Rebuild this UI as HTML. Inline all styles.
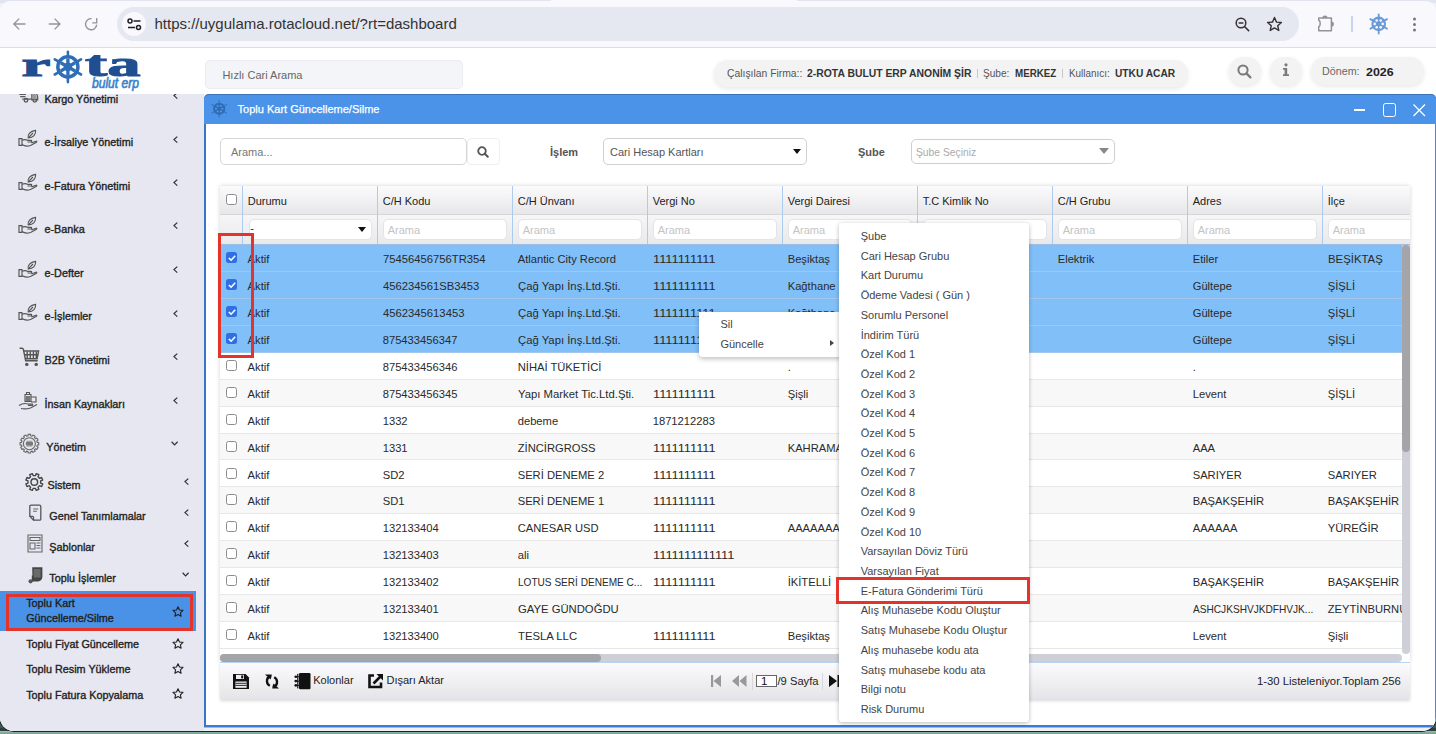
<!DOCTYPE html>
<html><head><meta charset="utf-8"><style>
*{box-sizing:border-box}
html,body{margin:0;padding:0}
body{width:1436px;height:734px;overflow:hidden;position:relative;background:#3e5a50;font-family:"Liberation Sans",sans-serif;color:#222}
.abs{position:absolute}
.t{position:absolute;white-space:nowrap;line-height:normal}
svg{position:absolute;overflow:visible}
.hp{background:#f3f3f3;box-shadow:0 2px 5px rgba(0,0,0,.09)}
</style></head><body>
<div class="abs" style="left:0;top:728px;width:1436px;height:6px;background:linear-gradient(#2c403c 0,#2c403c 2.5px,#95bfae 3.5px,#7aa594 5px)"></div>
<div class="abs" style="left:0;top:0;width:1436px;height:731px;border-radius:0 0 14px 14px;overflow:hidden;background:#f0f0f8;box-shadow:0 0 0 1px #222">
<div class="abs" style="left:0px;top:0px;width:1436px;height:3px;background:#e2e5ef"></div>
<div class="abs" style="left:0px;top:1px;width:1436px;height:46px;background:#f8f8fd;border-radius:10px 10px 0 0"></div>
<div class="abs" style="left:551px;top:0px;width:246px;height:3px;background:#f8f8fd"></div>
<div class="abs" style="left:0px;top:47px;width:1436px;height:1px;background:#dcdee6"></div>
<div class="abs" style="left:117px;top:7px;width:1182px;height:34px;border-radius:17px;background:#e5e8f0"></div>
<div class="abs" style="left:122px;top:12px;width:24px;height:24px;border-radius:12px;background:#f8f8fd"></div>
<div class="t" style="left:154.50px;top:15.22px;font-size:15px;color:#333;">https://uygulama.rotacloud.net/?rt=dashboard</div>
<svg style="left:12px;top:17px" width="15" height="14" viewBox="0 0 15 14"><path d="M13.5 7H2.5M7.2 1.6L1.8 7l5.4 5.4" fill="none" stroke="#939398" stroke-width="1.3"/></svg>
<svg style="left:48px;top:17px" width="15" height="14" viewBox="0 0 15 14"><path d="M0.8 7h11M6.6 1.6L12 7l-5.4 5.4" fill="none" stroke="#939398" stroke-width="1.3"/></svg>
<svg style="left:84px;top:17px" width="15" height="15" viewBox="0 0 15 15"><path d="M7.6 1.6A5.6 5.6 0 1 0 12.7 7.6" fill="none" stroke="#939398" stroke-width="1.35"/><path d="M12.7 1v4.8H8.3" fill="none" stroke="#939398" stroke-width="1.35"/></svg>
<svg style="left:127px;top:18px" width="15" height="13" viewBox="0 0 15 13"><circle cx="3" cy="3" r="2" fill="none" stroke="#1f1f1f" stroke-width="1.5"/><path d="M6.5 3h7M1 9.5h7" stroke="#1f1f1f" stroke-width="1.5"/><circle cx="11.5" cy="9.5" r="2" fill="none" stroke="#1f1f1f" stroke-width="1.5"/></svg>
<svg style="left:1235px;top:17px" width="16" height="15" viewBox="0 0 16 15"><circle cx="6" cy="6" r="4.8" fill="none" stroke="#333" stroke-width="1.5"/><path d="M3.6 6h4.8M9.5 9.5l4.6 4.6" stroke="#333" stroke-width="1.5"/></svg>
<svg style="left:1266px;top:16px" width="17" height="16" viewBox="0 0 17 16"><path d="M8.5 1.5l2 4.6 4.9.4-3.7 3.2 1.1 4.8-4.3-2.6-4.3 2.6 1.1-4.8L1.6 6.5l4.9-.4z" fill="none" stroke="#333" stroke-width="1.4" stroke-linejoin="round"/></svg>
<svg style="left:1317px;top:14px" width="19" height="18" viewBox="0 0 19 18"><path d="M1.75 3.95H14.4V16.7H1.75V12.8C3.7 12.1 3.7 6.9 1.75 6.2Z" fill="none" stroke="#929297" stroke-width="1.5" stroke-linejoin="round"/><path d="M5.3 4.1a2.65 2.65 0 0 1 5.3 0z" fill="#929297"/><path d="M14.4 7.4a2.55 2.55 0 0 1 0 5.1z" fill="#929297"/></svg>
<div class="abs" style="left:1351px;top:16px;width:1.5px;height:16px;background:#c8d5f3"></div>
<svg style="left:1412px;top:17px" width="5" height="15" viewBox="0 0 5 15"><circle cx="2.5" cy="2" r="1.5" fill="#777"/><circle cx="2.5" cy="7.5" r="1.5" fill="#777"/><circle cx="2.5" cy="13" r="1.5" fill="#777"/></svg>
<svg style="left:0;top:0" width="1436" height="734" viewBox="0 0 1436 734"><path d="M1384.76 20.40L1387.01 19.10M1378.70 16.90L1378.70 14.30M1372.64 20.40L1370.39 19.10M1372.64 27.40L1370.39 28.70M1378.70 30.90L1378.70 33.50M1384.76 27.40L1387.01 28.70" stroke="#6b9ad7" stroke-width="1.8" stroke-linecap="round"/><circle cx="1378.7" cy="23.9" r="7.3" fill="#6b9ad7"/><circle cx="1382.70" cy="23.90" r="1.3" fill="#f8f8fd"/><circle cx="1380.70" cy="20.44" r="1.3" fill="#f8f8fd"/><circle cx="1376.70" cy="20.44" r="1.3" fill="#f8f8fd"/><circle cx="1374.70" cy="23.90" r="1.3" fill="#f8f8fd"/><circle cx="1376.70" cy="27.36" r="1.3" fill="#f8f8fd"/><circle cx="1380.70" cy="27.36" r="1.3" fill="#f8f8fd"/></svg>
<div class="abs" style="left:0px;top:48px;width:1436px;height:679px;background:#fff"></div>
<div class="abs" style="left:0px;top:727px;width:1436px;height:1px;background:#b4b4bc"></div>
<div class="abs" style="left:0px;top:728px;width:1436px;height:3px;background:#f0f0f8"></div>
<svg style="left:0px;top:46px" width="150" height="50" viewBox="0 0 150 50">
<text x="21.6" y="30" font-family="Liberation Serif" font-weight="bold" font-size="34" fill="#1f4f91" stroke="#1f4f91" stroke-width="1" textLength="29" lengthAdjust="spacingAndGlyphs">r</text>
<text x="85" y="30" font-family="Liberation Serif" font-weight="bold" font-size="35" fill="#1f4f91" stroke="#1f4f91" stroke-width="1" textLength="55.5" lengthAdjust="spacingAndGlyphs">ta</text>
<text x="92" y="42.3" font-family="Liberation Sans" font-style="italic" font-size="14" fill="#3d84cc" stroke="#3d84cc" stroke-width="0.7" textLength="47" lengthAdjust="spacingAndGlyphs">bulut erp</text>
</svg>
<div class="abs" style="left:205px;top:60px;width:258px;height:29px;border-radius:5px;background:#f4f5f9;border:1px solid #ebebf0"></div>
<div class="t" style="left:222.40px;top:69.25px;font-size:11px;color:#666;">Hızlı Cari Arama</div>
<div class="abs hp" style="left:714px;top:60px;width:474px;height:27px;border-radius:14px"></div>
<div class="t" style="left:727.00px;top:66.86px;font-size:11.2px;color:#555;transform:scaleX(0.9248);transform-origin:0 0;">Çalışılan Firma::</div>
<div class="t" style="left:806.70px;top:66.86px;font-size:11.2px;color:#333;font-weight:700;transform:scaleX(0.9282);transform-origin:0 0;">2-ROTA BULUT ERP ANONİM ŞİR</div>
<div class="t" style="left:983.40px;top:66.86px;font-size:11.2px;color:#555;transform:scaleX(0.9020);transform-origin:0 0;">Şube:</div>
<div class="t" style="left:1014.80px;top:66.86px;font-size:11.2px;color:#333;font-weight:700;transform:scaleX(0.8734);transform-origin:0 0;">MERKEZ</div>
<div class="t" style="left:1068.60px;top:66.86px;font-size:11.2px;color:#555;transform:scaleX(0.8835);transform-origin:0 0;">Kullanıcı:</div>
<div class="t" style="left:1114.60px;top:66.86px;font-size:11.2px;color:#333;font-weight:700;transform:scaleX(0.9100);transform-origin:0 0;">UTKU ACAR</div>
<div class="abs" style="left:977px;top:69px;width:1px;height:9px;background:#c8c8c8"></div>
<div class="abs" style="left:1061.5px;top:69px;width:1px;height:9px;background:#c8c8c8"></div>
<div class="abs hp" style="left:1228.5px;top:57px;width:32px;height:28px;border-radius:14px"></div>
<svg style="left:1237px;top:64px" width="15" height="15" viewBox="0 0 15 15"><circle cx="6" cy="6" r="4.6" fill="none" stroke="#7a7a7c" stroke-width="2"/><path d="M9.4 9.4l4 4" stroke="#7a7a7c" stroke-width="2.2" stroke-linecap="round"/></svg>
<div class="abs hp" style="left:1270px;top:57px;width:32px;height:28px;border-radius:14px"></div>
<svg style="left:1282px;top:63px" width="8" height="14" viewBox="0 0 8 14"><circle cx="4" cy="1.8" r="1.6" fill="#7a7a7c"/><path d="M1 5h4.2v6.3H7V13H1v-1.7h1.6V6.7H1z" fill="#7a7a7c"/></svg>
<div class="abs hp" style="left:1311px;top:57px;width:113px;height:28px;border-radius:14px"></div>
<div class="t" style="left:1322.40px;top:64.58px;font-size:11.4px;color:#666;transform:scaleX(0.9420);transform-origin:0 0;">Dönem:</div>
<div class="t" style="left:1365.80px;top:64.50px;font-size:11.6px;color:#222;font-weight:700;transform:scaleX(1.0695);transform-origin:0 0;">2026</div>
<svg style="left:0;top:0" width="1436" height="734" viewBox="0 0 1436 734"><circle cx="67.9" cy="66.9" r="10.05" fill="none" stroke="#2f6db6" stroke-width="3.50"/><circle cx="67.9" cy="66.9" r="4.3" fill="#2f6db6"/><path d="M67.90 66.90L75.09 62.75M67.90 66.90L67.90 58.60M67.90 66.90L60.71 62.75M67.90 66.90L60.71 71.05M67.90 66.90L67.90 75.20M67.90 66.90L75.09 71.05" stroke="#2f6db6" stroke-width="3.3"/><path d="M77.69 61.25L81.06 59.30M67.90 55.60L67.90 51.70M58.11 61.25L54.74 59.30M58.11 72.55L54.74 74.50M67.90 78.20L67.90 82.10M77.69 72.55L81.06 74.50" stroke="#2f6db6" stroke-width="2.6" stroke-linecap="round"/></svg>
<div class="abs" style="left:0px;top:94px;width:204px;height:640px;background:#e6e7f0"></div>
<div class="abs" style="left:0;top:94px;width:204px;height:640px;overflow:hidden"><div class="abs" style="left:0;top:-94px;width:204px;height:733px">
<div class="t" style="left:44.50px;top:92.73px;font-size:10.8px;color:#222;-webkit-text-stroke:0.35px #222;">Kargo Yönetimi</div>
<svg style="left:173.4px;top:91.9px" width="6" height="8" viewBox="0 0 6 8"><path d="M4.3 0.6L1 3.6 4.3 6.6" fill="none" stroke="#333" stroke-width="1.25"/></svg>
<svg style="left:18.5px;top:91.9px" width="20" height="13" viewBox="0 0 20 13"><g fill="none" stroke="#5a5a5a" stroke-width="1.35"><path d="M0.3 2.2h6.5M1.2 4.6h5.3"/><path d="M3.3 7.1h9.8M12.9 0.5h1.9c2.2 0 3.8 2.4 3.8 5v2.4h-5.7z"/><circle cx="7" cy="8.3" r="1.8"/><circle cx="15.8" cy="8.3" r="1.8"/></g><path d="M13.6 1.5h1.2c1.5 0 2.7 1.8 2.7 3.8v1.6h-3.9z" fill="#999"/></svg>
<div class="t" style="left:44.50px;top:136.43px;font-size:10.8px;color:#222;-webkit-text-stroke:0.35px #222;">e-İrsaliye Yönetimi</div>
<svg style="left:173.4px;top:135.6px" width="6" height="8" viewBox="0 0 6 8"><path d="M4.3 0.6L1 3.6 4.3 6.6" fill="none" stroke="#333" stroke-width="1.25"/></svg>
<svg style="left:18px;top:130.2px" width="20" height="18" viewBox="0 0 20 18"><g fill="none" stroke="#555" stroke-width="1.15"><path d="M1 8.6h3v6.8H1z"/><path d="M4 10.2c2-.7 4-.7 6 .2h3c1 0 1 1.6 0 1.6h-3.5M4 14.6c3 2 6 1.8 9 .6l5.5-3c.7-.5.1-1.4-.7-1l-4.3 1.8"/><path d="M10.2 8C9.5 4.5 12 1.2 17.6.4c.4 4.1-2.1 7.1-7.4 7.6zM10.5 7.6L15 3"/></g></svg>
<div class="t" style="left:44.50px;top:179.83px;font-size:10.8px;color:#222;-webkit-text-stroke:0.35px #222;">e-Fatura Yönetimi</div>
<svg style="left:173.4px;top:179.0px" width="6" height="8" viewBox="0 0 6 8"><path d="M4.3 0.6L1 3.6 4.3 6.6" fill="none" stroke="#333" stroke-width="1.25"/></svg>
<svg style="left:18px;top:173.6px" width="20" height="18" viewBox="0 0 20 18"><g fill="none" stroke="#555" stroke-width="1.15"><path d="M1 8.6h3v6.8H1z"/><path d="M4 10.2c2-.7 4-.7 6 .2h3c1 0 1 1.6 0 1.6h-3.5M4 14.6c3 2 6 1.8 9 .6l5.5-3c.7-.5.1-1.4-.7-1l-4.3 1.8"/><path d="M10.2 8C9.5 4.5 12 1.2 17.6.4c.4 4.1-2.1 7.1-7.4 7.6zM10.5 7.6L15 3"/></g></svg>
<div class="t" style="left:44.50px;top:223.23px;font-size:10.8px;color:#222;-webkit-text-stroke:0.35px #222;">e-Banka</div>
<svg style="left:173.4px;top:222.4px" width="6" height="8" viewBox="0 0 6 8"><path d="M4.3 0.6L1 3.6 4.3 6.6" fill="none" stroke="#333" stroke-width="1.25"/></svg>
<svg style="left:18px;top:217px" width="20" height="18" viewBox="0 0 20 18"><g fill="none" stroke="#555" stroke-width="1.15"><path d="M1 8.6h3v6.8H1z"/><path d="M4 10.2c2-.7 4-.7 6 .2h3c1 0 1 1.6 0 1.6h-3.5M4 14.6c3 2 6 1.8 9 .6l5.5-3c.7-.5.1-1.4-.7-1l-4.3 1.8"/><path d="M10.2 8C9.5 4.5 12 1.2 17.6.4c.4 4.1-2.1 7.1-7.4 7.6zM10.5 7.6L15 3"/></g></svg>
<div class="t" style="left:44.50px;top:266.83px;font-size:10.8px;color:#222;-webkit-text-stroke:0.35px #222;">e-Defter</div>
<svg style="left:173.4px;top:266.0px" width="6" height="8" viewBox="0 0 6 8"><path d="M4.3 0.6L1 3.6 4.3 6.6" fill="none" stroke="#333" stroke-width="1.25"/></svg>
<svg style="left:18px;top:260.6px" width="20" height="18" viewBox="0 0 20 18"><g fill="none" stroke="#555" stroke-width="1.15"><path d="M1 8.6h3v6.8H1z"/><path d="M4 10.2c2-.7 4-.7 6 .2h3c1 0 1 1.6 0 1.6h-3.5M4 14.6c3 2 6 1.8 9 .6l5.5-3c.7-.5.1-1.4-.7-1l-4.3 1.8"/><path d="M10.2 8C9.5 4.5 12 1.2 17.6.4c.4 4.1-2.1 7.1-7.4 7.6zM10.5 7.6L15 3"/></g></svg>
<div class="t" style="left:44.50px;top:310.33px;font-size:10.8px;color:#222;-webkit-text-stroke:0.35px #222;">e-İşlemler</div>
<svg style="left:173.4px;top:309.5px" width="6" height="8" viewBox="0 0 6 8"><path d="M4.3 0.6L1 3.6 4.3 6.6" fill="none" stroke="#333" stroke-width="1.25"/></svg>
<svg style="left:18px;top:304.1px" width="20" height="18" viewBox="0 0 20 18"><g fill="none" stroke="#555" stroke-width="1.15"><path d="M1 8.6h3v6.8H1z"/><path d="M4 10.2c2-.7 4-.7 6 .2h3c1 0 1 1.6 0 1.6h-3.5M4 14.6c3 2 6 1.8 9 .6l5.5-3c.7-.5.1-1.4-.7-1l-4.3 1.8"/><path d="M10.2 8C9.5 4.5 12 1.2 17.6.4c.4 4.1-2.1 7.1-7.4 7.6zM10.5 7.6L15 3"/></g></svg>
<div class="t" style="left:44.50px;top:353.63px;font-size:10.8px;color:#222;-webkit-text-stroke:0.35px #222;">B2B Yönetimi</div>
<svg style="left:173.4px;top:352.79999999999995px" width="6" height="8" viewBox="0 0 6 8"><path d="M4.3 0.6L1 3.6 4.3 6.6" fill="none" stroke="#333" stroke-width="1.25"/></svg>
<svg style="left:18.5px;top:347.4px" width="21" height="20" viewBox="0 0 21 20"><g fill="none" stroke="#555" stroke-width="1.4"><path d="M0.6 1.2h2.3c.9 0 1.3.5 1.5 1.3l2.3 11.2h12"/><path d="M4.6 4h15l-1.5 7.8H6.2"/><path d="M8.2 4.5v7M11.3 4.5v7M14.4 4.5v7M17.3 4.5v7M5.3 7.8h14"/></g><circle cx="7.8" cy="17.4" r="1.7" fill="#555"/><circle cx="17.2" cy="17.4" r="1.7" fill="#555"/></svg>
<div class="t" style="left:44.50px;top:397.63px;font-size:10.8px;color:#222;-webkit-text-stroke:0.35px #222;">İnsan Kaynakları</div>
<svg style="left:173.4px;top:396.79999999999995px" width="6" height="8" viewBox="0 0 6 8"><path d="M4.3 0.6L1 3.6 4.3 6.6" fill="none" stroke="#333" stroke-width="1.25"/></svg>
<svg style="left:18px;top:391.4px" width="21" height="19" viewBox="0 0 21 19"><g fill="none" stroke="#555" stroke-width="1.1"><path d="M7 3.5h6v7H7z"/><path d="M8.5 3.5v-2h3v2"/><path d="M13 6h5v5h-5"/><path d="M1 14.5c3-2 6-2.5 9-1.5h4c1 0 1 1.4 0 1.4h-4M3 17.5c3 0.6 6 .6 9.5-.6l6.5-3.5"/></g><rect x="7.5" y="5" width="5" height="5" fill="#777"/></svg>
<div class="t" style="left:46.30px;top:441.03px;font-size:10.8px;color:#222;-webkit-text-stroke:0.35px #222;">Yönetim</div>
<svg style="left:170.8px;top:441.4px" width="8" height="6" viewBox="0 0 8 6"><path d="M0.6 0.8L3.6 3.9 6.6 0.8" fill="none" stroke="#333" stroke-width="1.25"/></svg>
<svg style="left:0;top:0" width="1436" height="734" viewBox="0 0 1436 734"><path d="M37.18 442.34L38.72 442.47L38.72 444.93L37.18 445.06L36.82 446.41L38.08 447.30L36.86 449.42L35.46 448.77L34.47 449.76L35.12 451.16L33.00 452.38L32.11 451.12L30.76 451.48L30.63 453.02L28.17 453.02L28.04 451.48L26.69 451.12L25.80 452.38L23.68 451.16L24.33 449.76L23.34 448.77L21.94 449.42L20.72 447.30L21.98 446.41L21.62 445.06L20.08 444.93L20.08 442.47L21.62 442.34L21.98 440.99L20.72 440.10L21.94 437.98L23.34 438.63L24.33 437.64L23.68 436.24L25.80 435.02L26.69 436.28L28.04 435.92L28.17 434.38L30.63 434.38L30.76 435.92L32.11 436.28L33.00 435.02L35.12 436.24L34.47 437.64L35.46 438.63L36.86 437.98L38.08 440.10L36.82 440.99Z" fill="none" stroke="#666" stroke-width="1.1" stroke-linejoin="round"/><circle cx="29.4" cy="443.7" r="6" fill="none" stroke="#666" stroke-width="1.1"/><rect x="25.8" y="441.6" width="7.2" height="4.2" rx="1.5" fill="#7a7a7a"/><path d="M26.5 441.2h6M26.5 446.2h6" stroke="#999" stroke-width="0.8"/></svg>\n<div class="t" style="left:47.50px;top:479.23px;font-size:10.8px;color:#222;-webkit-text-stroke:0.35px #222;">Sistem</div>
<svg style="left:184.4px;top:478.2px" width="6" height="8" viewBox="0 0 6 8"><path d="M4.3 0.6L1 3.6 4.3 6.6" fill="none" stroke="#333" stroke-width="1.25"/></svg>
<svg style="left:0;top:0" width="1436" height="734" viewBox="0 0 1436 734"><path d="M40.61 483.05L42.68 483.94L41.60 486.55L39.51 485.72L38.02 487.21L38.85 489.30L36.24 490.38L35.35 488.31L33.25 488.31L32.36 490.38L29.75 489.30L30.58 487.21L29.09 485.72L27.00 486.55L25.92 483.94L27.99 483.05L27.99 480.95L25.92 480.06L27.00 477.45L29.09 478.28L30.58 476.79L29.75 474.70L32.36 473.62L33.25 475.69L35.35 475.69L36.24 473.62L38.85 474.70L38.02 476.79L39.51 478.28L41.60 477.45L42.68 480.06L40.61 480.95Z" fill="none" stroke="#444" stroke-width="1.35" stroke-linejoin="round"/><circle cx="34.3" cy="482" r="3.3" fill="none" stroke="#444" stroke-width="1.4"/></svg>\n<div class="t" style="left:49.30px;top:510.03px;font-size:10.8px;color:#222;-webkit-text-stroke:0.35px #222;">Genel Tanımlamalar</div>
<svg style="left:184.4px;top:508.99999999999994px" width="6" height="8" viewBox="0 0 6 8"><path d="M4.3 0.6L1 3.6 4.3 6.6" fill="none" stroke="#333" stroke-width="1.25"/></svg>
<svg style="left:28px;top:503.99999999999994px" width="15" height="18" viewBox="0 0 15 18"><path d="M3 1.2h8.6c.7 0 1.2.5 1.2 1.2v12.6c0 .7-.5 1.2-1.2 1.2H5.6L1.8 12.4V2.4c0-.7.5-1.2 1.2-1.2z" fill="none" stroke="#555" stroke-width="1.3" stroke-linejoin="round"/><path d="M1.9 12.4h2.6c.6 0 1.1.5 1.1 1.1v2.7" fill="none" stroke="#555" stroke-width="1.2"/><path d="M5.2 5h5M5.2 7.3h3.6" stroke="#666" stroke-width="1.1"/></svg>\n<div class="t" style="left:49.30px;top:541.03px;font-size:10.8px;color:#222;-webkit-text-stroke:0.35px #222;">Şablonlar</div>
<svg style="left:184.4px;top:540.0px" width="6" height="8" viewBox="0 0 6 8"><path d="M4.3 0.6L1 3.6 4.3 6.6" fill="none" stroke="#333" stroke-width="1.25"/></svg>
<svg style="left:27px;top:534.3px" width="16" height="19" viewBox="0 0 16 19"><g fill="none" stroke="#666" stroke-width="1.1"><path d="M1 1h14v17H1z"/><path d="M3 3.5h10v3H3zM3 9h5v6H3zM9.5 9h4M9.5 11.5h4M9.5 14h4"/></g></svg>
<div class="t" style="left:49.30px;top:571.83px;font-size:10.8px;color:#222;-webkit-text-stroke:0.35px #222;">Toplu İşlemler</div>
<svg style="left:181.5px;top:572.4px" width="8" height="6" viewBox="0 0 8 6"><path d="M0.6 0.8L3.6 3.9 6.6 0.8" fill="none" stroke="#333" stroke-width="1.25"/></svg>
<svg style="left:27.5px;top:566.2px" width="16" height="18" viewBox="0 0 16 18"><path d="M4.2 1.2h10.2v9.6c0 2.6-1.8 4.6-4.4 4.6H4.6z" fill="#444"/><path d="M5.6 3h7v8.5H5.6z" fill="#6a6a6a"/><path d="M4.6 9.5v5.8" stroke="#444" stroke-width="1.6"/><circle cx="2.6" cy="15.3" r="2.1" fill="#555"/></svg>\n<div class="abs" style="left:0px;top:591.2px;width:195.7px;height:40.2px;background:#4a92e8"></div>
<div class="abs" style="left:6.2px;top:594.2px;width:186.8px;height:37.2px;border:3px solid #e3342b"></div>
<div class="t" style="left:26.20px;top:597.33px;font-size:10.8px;color:#1a1a1a;-webkit-text-stroke:0.35px #222;">Toplu Kart</div>
<div class="t" style="left:26.20px;top:612.03px;font-size:10.8px;color:#1a1a1a;-webkit-text-stroke:0.35px #222;">Güncelleme/Silme</div>
<svg style="left:172px;top:605.5px" width="12" height="11" viewBox="0 0 12 11"><path d="M6 0.8l1.5 3.2 3.5.4-2.6 2.4.7 3.4L6 8.5 2.9 10.2l.7-3.4L1 4.4l3.5-.4z" fill="none" stroke="#222" stroke-width="1.1" stroke-linejoin="round"/></svg>
<div class="t" style="left:26.20px;top:638.13px;font-size:10.8px;color:#1a1a1a;-webkit-text-stroke:0.35px #222;">Toplu Fiyat Güncelleme</div>
<svg style="left:172px;top:637.9px" width="12" height="11" viewBox="0 0 12 11"><path d="M6 0.8l1.5 3.2 3.5.4-2.6 2.4.7 3.4L6 8.5 2.9 10.2l.7-3.4L1 4.4l3.5-.4z" fill="none" stroke="#222" stroke-width="1.1" stroke-linejoin="round"/></svg>
<div class="t" style="left:26.20px;top:663.43px;font-size:10.8px;color:#1a1a1a;-webkit-text-stroke:0.35px #222;">Toplu Resim Yükleme</div>
<svg style="left:172px;top:663.2px" width="12" height="11" viewBox="0 0 12 11"><path d="M6 0.8l1.5 3.2 3.5.4-2.6 2.4.7 3.4L6 8.5 2.9 10.2l.7-3.4L1 4.4l3.5-.4z" fill="none" stroke="#222" stroke-width="1.1" stroke-linejoin="round"/></svg>
<div class="t" style="left:26.20px;top:688.63px;font-size:10.8px;color:#1a1a1a;-webkit-text-stroke:0.35px #222;">Toplu Fatura Kopyalama</div>
<svg style="left:172px;top:688.4px" width="12" height="11" viewBox="0 0 12 11"><path d="M6 0.8l1.5 3.2 3.5.4-2.6 2.4.7 3.4L6 8.5 2.9 10.2l.7-3.4L1 4.4l3.5-.4z" fill="none" stroke="#222" stroke-width="1.1" stroke-linejoin="round"/></svg>
</div></div>
<div class="abs" style="left:204px;top:94px;width:1232px;height:633px;background:#fff;border:2px solid #3a74c4;border-right:1px solid #4a8ae0;border-bottom-color:#3a7bd8;border-top:0;border-radius:5px 5px 0 0"></div>
<div class="abs" style="left:204px;top:94px;width:1232px;height:30px;background:#4a93e9;border-top:1px solid #3d74b8;border-radius:5px 5px 0 0"></div>
<svg style="left:0;top:0" width="1436" height="734" viewBox="0 0 1436 734"><path d="M224.22 105.90L226.47 104.60M219.20 103.00L219.20 100.40M214.18 105.90L211.93 104.60M214.18 111.70L211.93 113.00M219.20 114.60L219.20 117.20M224.22 111.70L226.47 113.00" stroke="#3a74bd" stroke-width="1.2" stroke-linecap="round"/><circle cx="219.2" cy="108.8" r="6.1" fill="#2f6bb6"/><circle cx="222.40" cy="108.80" r="1.05" fill="#5597e4"/><circle cx="220.80" cy="106.03" r="1.05" fill="#5597e4"/><circle cx="217.60" cy="106.03" r="1.05" fill="#5597e4"/><circle cx="216.00" cy="108.80" r="1.05" fill="#5597e4"/><circle cx="217.60" cy="111.57" r="1.05" fill="#5597e4"/><circle cx="220.80" cy="111.57" r="1.05" fill="#5597e4"/></svg>
<div class="t" style="left:237.60px;top:103.05px;font-size:11px;color:#fff;-webkit-text-stroke:0.25px #fff;">Toplu Kart Güncelleme/Silme</div>
<div class="abs" style="left:1354px;top:109px;width:11px;height:2px;background:#fff"></div>
<div class="abs" style="left:1383px;top:103px;width:13px;height:13.7px;border:1.7px solid #fff;border-radius:2.5px"></div>
<svg style="left:1413px;top:103.7px" width="12.5" height="12.5" viewBox="0 0 12.5 12.5"><path d="M0.5 0.5l11.5 11.5M12 0.5L0.5 12" stroke="#fff" stroke-width="1.3"/></svg>
<div class="abs" style="left:219.5px;top:138px;width:247px;height:27px;border:1px solid #d6d6d6;border-radius:5px 0 0 5px;border-radius:5px"></div>
<div class="t" style="left:231.00px;top:146.04px;font-size:11px;color:#777;">Arama...</div>
<div class="abs" style="left:467px;top:138px;width:33px;height:27px;border:1px solid #eeeeee;border-radius:4px"></div>
<svg style="left:477px;top:146px" width="12" height="12" viewBox="0 0 12 12"><circle cx="5" cy="5" r="3.8" fill="none" stroke="#555" stroke-width="1.8"/><path d="M7.8 7.8l3 3" stroke="#555" stroke-width="2" stroke-linecap="round"/></svg>
<div class="t" style="left:550.00px;top:146.04px;font-size:11px;color:#555;font-weight:700;">İşlem</div>
<div class="abs" style="left:603px;top:138px;width:204px;height:27px;border:1px solid #d0d0d0;border-radius:5px"></div>
<div class="t" style="left:610.00px;top:146.04px;font-size:11px;color:#555;">Cari Hesap Kartları</div>
<svg style="left:793px;top:148.5px" width="8" height="5" viewBox="0 0 8 5"><path d="M0 0h8L4 5z" fill="#111"/></svg>
<div class="t" style="left:858.00px;top:146.04px;font-size:11px;color:#555;font-weight:700;">Şube</div>
<div class="abs" style="left:911px;top:139px;width:204px;height:25px;border:1px solid #cfcfcf;border-radius:5px"></div>
<div class="t" style="left:915.80px;top:146.04px;font-size:11px;color:#aaa;transform:scaleX(0.9360);transform-origin:0 0;">Şube Seçiniz</div>
<svg style="left:1099px;top:148px" width="10" height="6" viewBox="0 0 10 6"><path d="M0 0h10L5 6z" fill="#888"/></svg>
<div class="abs" style="left:220px;top:186px;width:1190px;height:476px;box-shadow:0 0 4px rgba(0,0,0,.18);background:#fff"></div>
<div class="abs" style="left:220px;top:186px;width:1190px;height:29px;background:linear-gradient(#fbfbfc,#e7e7ea);border-bottom:1px solid #d6d6db"></div>
<div class="abs" style="left:220px;top:215px;width:1190px;height:30px;background:linear-gradient(#f6f6f7,#e9e9eb);border-bottom:1px solid #9dbde3"></div>
<div class="abs" style="left:220px;top:186px;width:1190px;height:58px;overflow:hidden"><div class="abs" style="left:-220px;top:-186px;width:1436px;height:300px">
<div class="abs" style="left:242.1px;top:186px;width:1.4px;height:58px;background:#abcbf0"></div>
<div class="t" style="left:247.70px;top:194.84px;font-size:11px;color:#222;">Durumu</div>
<div class="abs" style="left:249.0px;top:218.8px;width:122.6px;height:21px;background:#fff;border-radius:5px;border:1px solid #e4e4e6"></div>
<div class="t" style="left:250.20px;top:222.04px;font-size:11px;color:#222;">-</div>
<svg style="left:358.2px;top:227px" width="8" height="5" viewBox="0 0 8 5"><path d="M0 0h8L4 5z" fill="#111"/></svg>
<div class="abs" style="left:377.09999999999997px;top:186px;width:1.4px;height:58px;background:#abcbf0"></div>
<div class="t" style="left:382.70px;top:194.84px;font-size:11px;color:#222;">C/H Kodu</div>
<div class="abs" style="left:383.0px;top:218.8px;width:123.5px;height:21px;background:#fff;border-radius:5px;border:1px solid #e4e4e6"></div>
<div class="t" style="left:387.70px;top:223.54px;font-size:11px;color:#c4c4c4;">Arama</div>
<div class="abs" style="left:512.1px;top:186px;width:1.4px;height:58px;background:#abcbf0"></div>
<div class="t" style="left:517.70px;top:194.84px;font-size:11px;color:#222;">C/H Ünvanı</div>
<div class="abs" style="left:518.0px;top:218.8px;width:123.5px;height:21px;background:#fff;border-radius:5px;border:1px solid #e4e4e6"></div>
<div class="t" style="left:522.70px;top:223.54px;font-size:11px;color:#c4c4c4;">Arama</div>
<div class="abs" style="left:647.1px;top:186px;width:1.4px;height:58px;background:#abcbf0"></div>
<div class="t" style="left:652.70px;top:194.84px;font-size:11px;color:#222;">Vergi No</div>
<div class="abs" style="left:653.0px;top:218.8px;width:123.5px;height:21px;background:#fff;border-radius:5px;border:1px solid #e4e4e6"></div>
<div class="t" style="left:657.70px;top:223.54px;font-size:11px;color:#c4c4c4;">Arama</div>
<div class="abs" style="left:782.1px;top:186px;width:1.4px;height:58px;background:#abcbf0"></div>
<div class="t" style="left:787.70px;top:194.84px;font-size:11px;color:#222;">Vergi Dairesi</div>
<div class="abs" style="left:788.0px;top:218.8px;width:123.5px;height:21px;background:#fff;border-radius:5px;border:1px solid #e4e4e6"></div>
<div class="t" style="left:792.70px;top:223.54px;font-size:11px;color:#c4c4c4;">Arama</div>
<div class="abs" style="left:917.1px;top:186px;width:1.4px;height:58px;background:#abcbf0"></div>
<div class="t" style="left:922.70px;top:194.84px;font-size:11px;color:#222;">T.C Kimlik No</div>
<div class="abs" style="left:923.0px;top:218.8px;width:123.5px;height:21px;background:#fff;border-radius:5px;border:1px solid #e4e4e6"></div>
<div class="t" style="left:927.70px;top:223.54px;font-size:11px;color:#c4c4c4;">Arama</div>
<div class="abs" style="left:1052.1000000000001px;top:186px;width:1.4px;height:58px;background:#abcbf0"></div>
<div class="t" style="left:1057.70px;top:194.84px;font-size:11px;color:#222;">C/H Grubu</div>
<div class="abs" style="left:1058.0px;top:218.8px;width:123.5px;height:21px;background:#fff;border-radius:5px;border:1px solid #e4e4e6"></div>
<div class="t" style="left:1062.70px;top:223.54px;font-size:11px;color:#c4c4c4;">Arama</div>
<div class="abs" style="left:1187.1000000000001px;top:186px;width:1.4px;height:58px;background:#abcbf0"></div>
<div class="t" style="left:1192.70px;top:194.84px;font-size:11px;color:#222;">Adres</div>
<div class="abs" style="left:1193.0px;top:218.8px;width:123.5px;height:21px;background:#fff;border-radius:5px;border:1px solid #e4e4e6"></div>
<div class="t" style="left:1197.70px;top:223.54px;font-size:11px;color:#c4c4c4;">Arama</div>
<div class="abs" style="left:1322.1000000000001px;top:186px;width:1.4px;height:58px;background:#abcbf0"></div>
<div class="t" style="left:1327.70px;top:194.84px;font-size:11px;color:#222;">İlçe</div>
<div class="abs" style="left:1328.0px;top:218.8px;width:123.5px;height:21px;background:#fff;border-radius:5px;border:1px solid #e4e4e6"></div>
<div class="t" style="left:1332.70px;top:223.54px;font-size:11px;color:#c4c4c4;">Arama</div>
</div></div>
<div class="abs" style="left:225.6px;top:194.4px;width:11px;height:11px;border:1.3px solid #8c8c8c;border-radius:2.5px;background:#fff"></div>
<div class="abs" style="left:220px;top:244.3px;width:1182px;height:409px;overflow:hidden"><div class="abs" style="left:0;top:1px;width:1182px;height:409px">
<div class="abs" style="left:0;top:0.00px;width:1182px;height:26.9px;background:#80bff8;border-bottom:1px solid #a3c7ec"></div>
<div class="t" style="left:27.60px;top:8.06px;font-size:11.2px;color:#2a2a2a;">Aktif</div>
<div class="t" style="left:162.70px;top:8.06px;font-size:11.2px;color:#2a2a2a;transform:scaleX(1.0056);transform-origin:0 0;">75456456756TR354</div>
<div class="t" style="left:297.70px;top:8.06px;font-size:11.2px;color:#2a2a2a;">Atlantic City Record</div>
<div class="t" style="left:432.70px;top:8.06px;font-size:11.2px;color:#2a2a2a;transform:scaleX(1.1440);transform-origin:0 0;">1111111111</div>
<div class="t" style="left:567.70px;top:8.06px;font-size:11.2px;color:#2a2a2a;">Beşiktaş</div>
<div class="t" style="left:837.70px;top:8.06px;font-size:11.2px;color:#2a2a2a;">Elektrik</div>
<div class="t" style="left:972.70px;top:8.06px;font-size:11.2px;color:#2a2a2a;">Etiler</div>
<div class="t" style="left:1107.70px;top:8.06px;font-size:11.2px;color:#2a2a2a;transform:scaleX(1.0154);transform-origin:0 0;">BEŞİKTAŞ</div>
<div class="abs" style="left:6px;top:7.10px;width:11px;height:11px;border-radius:2.5px;background:#2f6fe4"></div>
<svg style="left:7.5px;top:9.60px" width="8" height="6" viewBox="0 0 8 6"><path d="M0.8 3l2.3 2.2L7.2 0.8" fill="none" stroke="#fff" stroke-width="1.6"/></svg>
<div class="abs" style="left:0;top:26.90px;width:1182px;height:26.9px;background:#80bff8;border-bottom:1px solid #a3c7ec"></div>
<div class="t" style="left:27.60px;top:34.96px;font-size:11.2px;color:#2a2a2a;">Aktif</div>
<div class="t" style="left:162.70px;top:34.96px;font-size:11.2px;color:#2a2a2a;transform:scaleX(1.0056);transform-origin:0 0;">456234561SB3453</div>
<div class="t" style="left:297.70px;top:34.96px;font-size:11.2px;color:#2a2a2a;transform:scaleX(1.0102);transform-origin:0 0;">Çağ Yapı İnş.Ltd.Şti.</div>
<div class="t" style="left:432.70px;top:34.96px;font-size:11.2px;color:#2a2a2a;transform:scaleX(1.1440);transform-origin:0 0;">1111111111</div>
<div class="t" style="left:567.70px;top:34.96px;font-size:11.2px;color:#2a2a2a;">Kağthane</div>
<div class="t" style="left:972.70px;top:34.96px;font-size:11.2px;color:#2a2a2a;">Gültepe</div>
<div class="t" style="left:1107.70px;top:34.96px;font-size:11.2px;color:#2a2a2a;">ŞİŞLİ</div>
<div class="abs" style="left:6px;top:34.00px;width:11px;height:11px;border-radius:2.5px;background:#2f6fe4"></div>
<svg style="left:7.5px;top:36.50px" width="8" height="6" viewBox="0 0 8 6"><path d="M0.8 3l2.3 2.2L7.2 0.8" fill="none" stroke="#fff" stroke-width="1.6"/></svg>
<div class="abs" style="left:0;top:53.80px;width:1182px;height:26.9px;background:#80bff8;border-bottom:1px solid #a3c7ec"></div>
<div class="t" style="left:27.60px;top:61.86px;font-size:11.2px;color:#2a2a2a;">Aktif</div>
<div class="t" style="left:162.70px;top:61.86px;font-size:11.2px;color:#2a2a2a;transform:scaleX(1.0066);transform-origin:0 0;">4562345613453</div>
<div class="t" style="left:297.70px;top:61.86px;font-size:11.2px;color:#2a2a2a;transform:scaleX(1.0102);transform-origin:0 0;">Çağ Yapı İnş.Ltd.Şti.</div>
<div class="t" style="left:432.70px;top:61.86px;font-size:11.2px;color:#2a2a2a;transform:scaleX(1.1440);transform-origin:0 0;">1111111111</div>
<div class="t" style="left:567.70px;top:61.86px;font-size:11.2px;color:#2a2a2a;">Kağthane</div>
<div class="t" style="left:972.70px;top:61.86px;font-size:11.2px;color:#2a2a2a;">Gültepe</div>
<div class="t" style="left:1107.70px;top:61.86px;font-size:11.2px;color:#2a2a2a;">ŞİŞLİ</div>
<div class="abs" style="left:6px;top:60.90px;width:11px;height:11px;border-radius:2.5px;background:#2f6fe4"></div>
<svg style="left:7.5px;top:63.40px" width="8" height="6" viewBox="0 0 8 6"><path d="M0.8 3l2.3 2.2L7.2 0.8" fill="none" stroke="#fff" stroke-width="1.6"/></svg>
<div class="abs" style="left:0;top:80.70px;width:1182px;height:26.9px;background:#80bff8;border-bottom:1px solid #a3c7ec"></div>
<div class="t" style="left:27.60px;top:88.76px;font-size:11.2px;color:#2a2a2a;">Aktif</div>
<div class="t" style="left:162.70px;top:88.76px;font-size:11.2px;color:#2a2a2a;">875433456347</div>
<div class="t" style="left:297.70px;top:88.76px;font-size:11.2px;color:#2a2a2a;transform:scaleX(1.0102);transform-origin:0 0;">Çağ Yapı İnş.Ltd.Şti.</div>
<div class="t" style="left:432.70px;top:88.76px;font-size:11.2px;color:#2a2a2a;transform:scaleX(1.1440);transform-origin:0 0;">1111111111</div>
<div class="t" style="left:567.70px;top:88.76px;font-size:11.2px;color:#2a2a2a;">Kağthane</div>
<div class="t" style="left:972.70px;top:88.76px;font-size:11.2px;color:#2a2a2a;">Gültepe</div>
<div class="t" style="left:1107.70px;top:88.76px;font-size:11.2px;color:#2a2a2a;">ŞİŞLİ</div>
<div class="abs" style="left:6px;top:87.80px;width:11px;height:11px;border-radius:2.5px;background:#2f6fe4"></div>
<svg style="left:7.5px;top:90.30px" width="8" height="6" viewBox="0 0 8 6"><path d="M0.8 3l2.3 2.2L7.2 0.8" fill="none" stroke="#fff" stroke-width="1.6"/></svg>
<div class="abs" style="left:0;top:107.60px;width:1182px;height:26.9px;background:#ffffff;border-bottom:1px solid #e7e7e7"></div>
<div class="t" style="left:27.60px;top:115.66px;font-size:11.2px;color:#2a2a2a;">Aktif</div>
<div class="t" style="left:162.70px;top:115.66px;font-size:11.2px;color:#2a2a2a;">875433456346</div>
<div class="t" style="left:297.70px;top:115.66px;font-size:11.2px;color:#2a2a2a;">NİHAİ TÜKETİCİ</div>
<div class="t" style="left:567.70px;top:115.66px;font-size:11.2px;color:#2a2a2a;">.</div>
<div class="t" style="left:972.70px;top:115.66px;font-size:11.2px;color:#2a2a2a;">.</div>
<div class="abs" style="left:5.5px;top:114.70px;width:11px;height:11px;border-radius:2.5px;border:1.3px solid #8c8c8c;background:#fff"></div>
<div class="abs" style="left:0;top:134.50px;width:1182px;height:26.9px;background:#f8f8f8;border-bottom:1px solid #e7e7e7"></div>
<div class="t" style="left:27.60px;top:142.56px;font-size:11.2px;color:#2a2a2a;">Aktif</div>
<div class="t" style="left:162.70px;top:142.56px;font-size:11.2px;color:#2a2a2a;">875433456345</div>
<div class="t" style="left:297.70px;top:142.56px;font-size:11.2px;color:#2a2a2a;transform:scaleX(1.0126);transform-origin:0 0;">Yapı Market Tic.Ltd.Şti.</div>
<div class="t" style="left:432.70px;top:142.56px;font-size:11.2px;color:#2a2a2a;transform:scaleX(1.1440);transform-origin:0 0;">1111111111</div>
<div class="t" style="left:567.70px;top:142.56px;font-size:11.2px;color:#2a2a2a;">Şişli</div>
<div class="t" style="left:972.70px;top:142.56px;font-size:11.2px;color:#2a2a2a;">Levent</div>
<div class="t" style="left:1107.70px;top:142.56px;font-size:11.2px;color:#2a2a2a;">ŞİŞLİ</div>
<div class="abs" style="left:5.5px;top:141.60px;width:11px;height:11px;border-radius:2.5px;border:1.3px solid #8c8c8c;background:#fff"></div>
<div class="abs" style="left:0;top:161.40px;width:1182px;height:26.9px;background:#ffffff;border-bottom:1px solid #e7e7e7"></div>
<div class="t" style="left:27.60px;top:169.46px;font-size:11.2px;color:#2a2a2a;">Aktif</div>
<div class="t" style="left:162.70px;top:169.46px;font-size:11.2px;color:#2a2a2a;">1332</div>
<div class="t" style="left:297.70px;top:169.46px;font-size:11.2px;color:#2a2a2a;">debeme</div>
<div class="t" style="left:432.70px;top:169.46px;font-size:11.2px;color:#2a2a2a;">1871212283</div>
<div class="abs" style="left:5.5px;top:168.50px;width:11px;height:11px;border-radius:2.5px;border:1.3px solid #8c8c8c;background:#fff"></div>
<div class="abs" style="left:0;top:188.30px;width:1182px;height:26.9px;background:#f8f8f8;border-bottom:1px solid #e7e7e7"></div>
<div class="t" style="left:27.60px;top:196.36px;font-size:11.2px;color:#2a2a2a;">Aktif</div>
<div class="t" style="left:162.70px;top:196.36px;font-size:11.2px;color:#2a2a2a;">1331</div>
<div class="t" style="left:297.70px;top:196.36px;font-size:11.2px;color:#2a2a2a;">ZİNCİRGROSS</div>
<div class="t" style="left:432.70px;top:196.36px;font-size:11.2px;color:#2a2a2a;transform:scaleX(1.1440);transform-origin:0 0;">1111111111</div>
<div class="t" style="left:567.70px;top:196.36px;font-size:11.2px;color:#2a2a2a;">KAHRAMANMARAŞ</div>
<div class="t" style="left:972.70px;top:196.36px;font-size:11.2px;color:#2a2a2a;">AAA</div>
<div class="abs" style="left:5.5px;top:195.40px;width:11px;height:11px;border-radius:2.5px;border:1.3px solid #8c8c8c;background:#fff"></div>
<div class="abs" style="left:0;top:215.20px;width:1182px;height:26.9px;background:#ffffff;border-bottom:1px solid #e7e7e7"></div>
<div class="t" style="left:27.60px;top:223.26px;font-size:11.2px;color:#2a2a2a;">Aktif</div>
<div class="t" style="left:162.70px;top:223.26px;font-size:11.2px;color:#2a2a2a;">SD2</div>
<div class="t" style="left:297.70px;top:223.26px;font-size:11.2px;color:#2a2a2a;">SERİ DENEME 2</div>
<div class="t" style="left:432.70px;top:223.26px;font-size:11.2px;color:#2a2a2a;transform:scaleX(1.1440);transform-origin:0 0;">1111111111</div>
<div class="t" style="left:972.70px;top:223.26px;font-size:11.2px;color:#2a2a2a;">SARIYER</div>
<div class="t" style="left:1107.70px;top:223.26px;font-size:11.2px;color:#2a2a2a;">SARIYER</div>
<div class="abs" style="left:5.5px;top:222.30px;width:11px;height:11px;border-radius:2.5px;border:1.3px solid #8c8c8c;background:#fff"></div>
<div class="abs" style="left:0;top:242.10px;width:1182px;height:26.9px;background:#f8f8f8;border-bottom:1px solid #e7e7e7"></div>
<div class="t" style="left:27.60px;top:250.16px;font-size:11.2px;color:#2a2a2a;">Aktif</div>
<div class="t" style="left:162.70px;top:250.16px;font-size:11.2px;color:#2a2a2a;">SD1</div>
<div class="t" style="left:297.70px;top:250.16px;font-size:11.2px;color:#2a2a2a;">SERİ DENEME 1</div>
<div class="t" style="left:432.70px;top:250.16px;font-size:11.2px;color:#2a2a2a;transform:scaleX(1.1440);transform-origin:0 0;">1111111111</div>
<div class="t" style="left:972.70px;top:250.16px;font-size:11.2px;color:#2a2a2a;">BAŞAKŞEHİR</div>
<div class="t" style="left:1107.70px;top:250.16px;font-size:11.2px;color:#2a2a2a;">BAŞAKŞEHİR</div>
<div class="abs" style="left:5.5px;top:249.20px;width:11px;height:11px;border-radius:2.5px;border:1.3px solid #8c8c8c;background:#fff"></div>
<div class="abs" style="left:0;top:269.00px;width:1182px;height:26.9px;background:#ffffff;border-bottom:1px solid #e7e7e7"></div>
<div class="t" style="left:27.60px;top:277.06px;font-size:11.2px;color:#2a2a2a;">Aktif</div>
<div class="t" style="left:162.70px;top:277.06px;font-size:11.2px;color:#2a2a2a;">132133404</div>
<div class="t" style="left:297.70px;top:277.06px;font-size:11.2px;color:#2a2a2a;">CANESAR USD</div>
<div class="t" style="left:432.70px;top:277.06px;font-size:11.2px;color:#2a2a2a;transform:scaleX(1.1440);transform-origin:0 0;">1111111111</div>
<div class="t" style="left:567.70px;top:277.06px;font-size:11.2px;color:#2a2a2a;">AAAAAAAAA</div>
<div class="t" style="left:972.70px;top:277.06px;font-size:11.2px;color:#2a2a2a;">AAAAAA</div>
<div class="t" style="left:1107.70px;top:277.06px;font-size:11.2px;color:#2a2a2a;">YÜREĞİR</div>
<div class="abs" style="left:5.5px;top:276.10px;width:11px;height:11px;border-radius:2.5px;border:1.3px solid #8c8c8c;background:#fff"></div>
<div class="abs" style="left:0;top:295.90px;width:1182px;height:26.9px;background:#f8f8f8;border-bottom:1px solid #e7e7e7"></div>
<div class="t" style="left:27.60px;top:303.96px;font-size:11.2px;color:#2a2a2a;">Aktif</div>
<div class="t" style="left:162.70px;top:303.96px;font-size:11.2px;color:#2a2a2a;">132133403</div>
<div class="t" style="left:297.70px;top:303.96px;font-size:11.2px;color:#2a2a2a;">ali</div>
<div class="t" style="left:432.70px;top:303.96px;font-size:11.2px;color:#2a2a2a;transform:scaleX(1.1480);transform-origin:0 0;">1111111111111</div>
<div class="abs" style="left:5.5px;top:303.00px;width:11px;height:11px;border-radius:2.5px;border:1.3px solid #8c8c8c;background:#fff"></div>
<div class="abs" style="left:0;top:322.80px;width:1182px;height:26.9px;background:#ffffff;border-bottom:1px solid #e7e7e7"></div>
<div class="t" style="left:27.60px;top:330.86px;font-size:11.2px;color:#2a2a2a;">Aktif</div>
<div class="t" style="left:162.70px;top:330.86px;font-size:11.2px;color:#2a2a2a;">132133402</div>
<div class="t" style="left:297.70px;top:330.86px;font-size:11.2px;color:#2a2a2a;transform:scaleX(0.9004);transform-origin:0 0;">LOTUS SERİ DENEME C...</div>
<div class="t" style="left:432.70px;top:330.86px;font-size:11.2px;color:#2a2a2a;transform:scaleX(1.1440);transform-origin:0 0;">1111111111</div>
<div class="t" style="left:567.70px;top:330.86px;font-size:11.2px;color:#2a2a2a;">İKİTELLİ</div>
<div class="t" style="left:972.70px;top:330.86px;font-size:11.2px;color:#2a2a2a;">BAŞAKŞEHİR</div>
<div class="t" style="left:1107.70px;top:330.86px;font-size:11.2px;color:#2a2a2a;">BAŞAKŞEHİR</div>
<div class="abs" style="left:5.5px;top:329.90px;width:11px;height:11px;border-radius:2.5px;border:1.3px solid #8c8c8c;background:#fff"></div>
<div class="abs" style="left:0;top:349.70px;width:1182px;height:26.9px;background:#f8f8f8;border-bottom:1px solid #e7e7e7"></div>
<div class="t" style="left:27.60px;top:357.76px;font-size:11.2px;color:#2a2a2a;">Aktif</div>
<div class="t" style="left:162.70px;top:357.76px;font-size:11.2px;color:#2a2a2a;">132133401</div>
<div class="t" style="left:297.70px;top:357.76px;font-size:11.2px;color:#2a2a2a;transform:scaleX(1.0083);transform-origin:0 0;">GAYE GÜNDOĞDU</div>
<div class="t" style="left:972.70px;top:357.76px;font-size:11.2px;color:#2a2a2a;transform:scaleX(0.9040);transform-origin:0 0;">ASHCJKSHVJKDFHVJK...</div>
<div class="t" style="left:1107.70px;top:357.76px;font-size:11.2px;color:#2a2a2a;">ZEYTİNBURNU</div>
<div class="abs" style="left:5.5px;top:356.80px;width:11px;height:11px;border-radius:2.5px;border:1.3px solid #8c8c8c;background:#fff"></div>
<div class="abs" style="left:0;top:376.60px;width:1182px;height:26.9px;background:#ffffff;border-bottom:1px solid #e7e7e7"></div>
<div class="t" style="left:27.60px;top:384.66px;font-size:11.2px;color:#2a2a2a;">Aktif</div>
<div class="t" style="left:162.70px;top:384.66px;font-size:11.2px;color:#2a2a2a;">132133400</div>
<div class="t" style="left:297.70px;top:384.66px;font-size:11.2px;color:#2a2a2a;transform:scaleX(1.0106);transform-origin:0 0;">TESLA LLC</div>
<div class="t" style="left:432.70px;top:384.66px;font-size:11.2px;color:#2a2a2a;transform:scaleX(1.1440);transform-origin:0 0;">1111111111</div>
<div class="t" style="left:567.70px;top:384.66px;font-size:11.2px;color:#2a2a2a;">Beşiktaş</div>
<div class="t" style="left:972.70px;top:384.66px;font-size:11.2px;color:#2a2a2a;">Levent</div>
<div class="t" style="left:1107.70px;top:384.66px;font-size:11.2px;color:#2a2a2a;">Şişli</div>
<div class="abs" style="left:5.5px;top:383.70px;width:11px;height:11px;border-radius:2.5px;border:1.3px solid #8c8c8c;background:#fff"></div>
</div></div>
<div class="abs" style="left:1402px;top:244.5px;width:8px;height:409px;background:#cfcfd7;border-radius:0 0 4px 4px"></div>
<div class="abs" style="left:1402px;top:244.5px;width:8px;height:207px;background:#a4a4a9;border-radius:4px"></div>
<div class="abs" style="left:220px;top:654.2px;width:1182px;height:7.6px;background:#cfcfd7;border-radius:4px"></div>
<div class="abs" style="left:220px;top:654.2px;width:381px;height:7.6px;background:#a4a4a9;border-radius:4px"></div>
<div class="abs" style="left:1402px;top:653.5px;width:8px;height:8.3px;background:#fff"></div>
<div class="abs" style="left:220px;top:662px;width:1190px;height:37px;background:linear-gradient(#fbfbfc,#e5e5e9);border-top:1px solid #b9d3f3;box-shadow:0 2px 3px rgba(0,0,0,.15)"></div>
<svg style="left:233px;top:673.5px" width="16" height="15" viewBox="0 0 16 15"><path d="M0 0h12.5L16 3.5V15H0z" fill="#111"/><rect x="3" y="0.8" width="8" height="4.2" fill="#eee"/><rect x="8.2" y="1.4" width="2" height="3" fill="#111"/><rect x="2.4" y="7.5" width="11.2" height="6.3" fill="#eee"/><path d="M2.4 9.3h11.2M2.4 11.4h11.2" stroke="#111" stroke-width="0.9"/></svg>
<svg style="left:264px;top:673.5px" width="16" height="15" viewBox="0 0 16 15"><path d="M7.2 2.2C4.5 2.6 2.8 4.8 3 7.5c.1 1.9 1.2 3.5 2.8 4.3" fill="none" stroke="#111" stroke-width="2.4"/><path d="M1 0.6L7.8 0.4 6.6 5.6z" fill="#111"/><path d="M8.8 12.8c2.7-.4 4.4-2.6 4.2-5.3-.1-1.9-1.2-3.5-2.8-4.3" fill="none" stroke="#111" stroke-width="2.4"/><path d="M15 14.4L8.2 14.6 9.4 9.4z" fill="#111"/></svg>
<svg style="left:293.8px;top:672.6px" width="17" height="17" viewBox="0 0 17 17"><rect x="5" y="0" width="11.5" height="16.2" rx="1.2" fill="#111"/><rect x="3.2" y="0.8" width="1.2" height="14.6" fill="#111"/><g fill="#111"><circle cx="1.8" cy="3.8" r="1.3"/><circle cx="1.8" cy="8.1" r="1.3"/><circle cx="1.8" cy="12.4" r="1.3"/></g><path d="M0.8 3.8h4M0.8 8.1h4M0.8 12.4h4" stroke="#111" stroke-width="1.1"/></svg>
<div class="t" style="left:313.20px;top:674.44px;font-size:11px;color:#222;">Kolonlar</div>
<svg style="left:368px;top:673.5px" width="15" height="14.5" viewBox="0 0 15 14.5"><path d="M6 1.5H1.5v11.5h11.5V8.5" fill="none" stroke="#111" stroke-width="2.6"/><path d="M8.5 0H15v6.5z" fill="#111"/><path d="M5.5 9.5l7-7" stroke="#111" stroke-width="2.6"/></svg>
<div class="t" style="left:386.50px;top:674.44px;font-size:11px;color:#222;">Dışarı Aktar</div>
<svg style="left:710.5px;top:675px" width="10" height="12" viewBox="0 0 10 12"><rect x="0" y="0" width="2.2" height="12" fill="#999"/><path d="M10 0v12L2.5 6z" fill="#999"/></svg>
<svg style="left:731.5px;top:675px" width="14.5" height="12" viewBox="0 0 14.5 12"><path d="M7 0v12L0 6zM14.5 0v12L7.5 6z" fill="#999"/></svg>
<div class="abs" style="left:752px;top:673px;width:1px;height:17px;background:#d8d8d8"></div>
<div class="abs" style="left:756px;top:675px;width:21px;height:12px;background:#fff;border:1px solid #666"></div>
<div class="t" style="left:761.00px;top:675.09px;font-size:11.5px;color:#111;">1</div>
<div class="t" style="left:777.50px;top:675.36px;font-size:11.2px;color:#222;">/9 Sayfa</div>
<div class="abs" style="left:822px;top:673px;width:1px;height:17px;background:#d8d8d8"></div>
<svg style="left:829px;top:675px" width="12" height="12" viewBox="0 0 12 12"><path d="M0 0v12L8 6z" fill="#111"/><rect x="8.5" y="0" width="2.5" height="12" fill="#111"/></svg>
<div class="t" style="left:1257.00px;top:674.77px;font-size:11.3px;color:#222;">1-30 Listeleniyor.Toplam 256</div>
<div class="abs" style="left:698.5px;top:312px;width:145px;height:44.5px;background:#fff;box-shadow:0 2px 5px rgba(0,0,0,.25);border-radius:0 0 4px 4px"></div>
<div class="t" style="left:720.40px;top:318.25px;font-size:11px;color:#444;">Sil</div>
<div class="t" style="left:720.40px;top:337.65px;font-size:11px;color:#444;">Güncelle</div>
<svg style="left:829.5px;top:340px" width="4" height="6" viewBox="0 0 4 6"><path d="M0 0l4 3-4 3z" fill="#444"/></svg>
<div class="abs" style="left:838.8px;top:223px;width:190.6px;height:499px;background:#fff;box-shadow:0 1px 4px rgba(0,0,0,.28);border-radius:3px"></div>
<div class="t" style="left:860.70px;top:229.94px;font-size:11px;color:#444;">Şube</div>
<div class="t" style="left:860.70px;top:249.66px;font-size:11px;color:#444;">Cari Hesap Grubu</div>
<div class="t" style="left:860.70px;top:269.37px;font-size:11px;color:#444;">Kart Durumu</div>
<div class="t" style="left:860.70px;top:289.08px;font-size:11px;color:#444;">Ödeme Vadesi ( Gün )</div>
<div class="t" style="left:860.70px;top:308.79px;font-size:11px;color:#444;">Sorumlu Personel</div>
<div class="t" style="left:860.70px;top:328.50px;font-size:11px;color:#444;">İndirim Türü</div>
<div class="t" style="left:860.70px;top:348.21px;font-size:11px;color:#444;">Özel Kod 1</div>
<div class="t" style="left:860.70px;top:367.92px;font-size:11px;color:#444;">Özel Kod 2</div>
<div class="t" style="left:860.70px;top:387.63px;font-size:11px;color:#444;">Özel Kod 3</div>
<div class="t" style="left:860.70px;top:407.34px;font-size:11px;color:#444;">Özel Kod 4</div>
<div class="t" style="left:860.70px;top:427.05px;font-size:11px;color:#444;">Özel Kod 5</div>
<div class="t" style="left:860.70px;top:446.76px;font-size:11px;color:#444;">Özel Kod 6</div>
<div class="t" style="left:860.70px;top:466.47px;font-size:11px;color:#444;">Özel Kod 7</div>
<div class="t" style="left:860.70px;top:486.18px;font-size:11px;color:#444;">Özel Kod 8</div>
<div class="t" style="left:860.70px;top:505.89px;font-size:11px;color:#444;">Özel Kod 9</div>
<div class="t" style="left:860.70px;top:525.60px;font-size:11px;color:#444;">Özel Kod 10</div>
<div class="t" style="left:860.70px;top:545.30px;font-size:11px;color:#444;">Varsayılan Döviz Türü</div>
<div class="t" style="left:860.70px;top:565.01px;font-size:11px;color:#444;">Varsayılan Fiyat</div>
<div class="t" style="left:860.70px;top:584.73px;font-size:11px;color:#444;">E-Fatura Gönderimi Türü</div>
<div class="t" style="left:860.70px;top:604.43px;font-size:11px;color:#444;">Alış Muhasebe Kodu Oluştur</div>
<div class="t" style="left:860.70px;top:624.14px;font-size:11px;color:#444;">Satış Muhasebe Kodu Oluştur</div>
<div class="t" style="left:860.70px;top:643.86px;font-size:11px;color:#444;">Alış muhasebe kodu ata</div>
<div class="t" style="left:860.70px;top:663.56px;font-size:11px;color:#444;">Satış muhasebe kodu ata</div>
<div class="t" style="left:860.70px;top:683.27px;font-size:11px;color:#444;">Bilgi notu</div>
<div class="t" style="left:860.70px;top:702.99px;font-size:11px;color:#444;">Risk Durumu</div>
<div class="abs" style="left:836.1px;top:576.6px;width:193.5px;height:27px;border:3px solid #e3342b"></div>
<div class="abs" style="left:218.4px;top:233px;width:35.6px;height:125px;border:3px solid #e3342b"></div>
</div>
</body></html>
